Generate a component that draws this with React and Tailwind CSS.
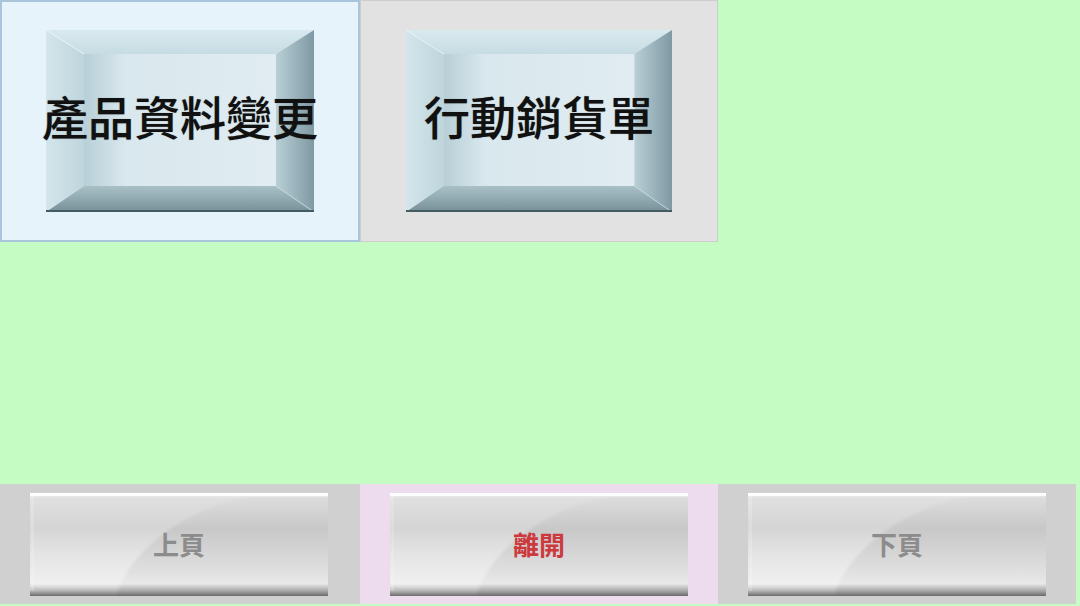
import React from "react";

const cjk = { fontFamily: '"Noto Sans CJK TC", "Noto Sans CJK SC", sans-serif' };

function BevelButton({ label, width, id }) {
  return (
    <div className="relative h-[182px] flex items-center justify-center" style={{ width }}>
      <svg className="absolute inset-0 h-full w-full" viewBox="0 0 268 182" preserveAspectRatio="none">
        <defs>
          <linearGradient id={`top-${id}`} x1="0" y1="0" x2="0" y2="1">
            <stop offset="0" stopColor="#d9eaef" />
            <stop offset="1" stopColor="#c6dce3" />
          </linearGradient>
          <linearGradient id={`left-${id}`} x1="0" y1="0" x2="1" y2="0">
            <stop offset="0" stopColor="#d3e6ec" />
            <stop offset="1" stopColor="#bfd5dc" />
          </linearGradient>
          <linearGradient id={`right-${id}`} x1="0" y1="0" x2="1" y2="0">
            <stop offset="0" stopColor="#b9cfd6" />
            <stop offset="1" stopColor="#7f99a3" />
          </linearGradient>
          <linearGradient id={`bottom-${id}`} x1="0" y1="0" x2="0" y2="1">
            <stop offset="0" stopColor="#a9c0c7" />
            <stop offset="0.9" stopColor="#7c959d" />
            <stop offset="1" stopColor="#4e666e" />
          </linearGradient>
          <linearGradient id={`face-${id}`} x1="0" y1="0" x2="1" y2="0">
            <stop offset="0" stopColor="#b8cfd7" />
            <stop offset="0.22" stopColor="#d9e8ee" />
            <stop offset="1" stopColor="#e0ecf1" />
          </linearGradient>
        </defs>
        <polygon points="0,0 268,0 230,24 38,24" fill={`url(#top-${id})`} />
        <polygon points="0,0 38,24 38,156 0,182" fill={`url(#left-${id})`} />
        <polygon points="268,0 268,182 230,156 230,24" fill={`url(#right-${id})`} />
        <polygon points="0,182 38,156 230,156 268,182" fill={`url(#bottom-${id})`} />
        <rect x="38" y="24" width="192" height="132" fill={`url(#face-${id})`} />
        <line x1="0" y1="0" x2="38" y2="24" stroke="#eef7fa" strokeWidth="1" opacity="0.8" />
        <line x1="268" y1="182" x2="230" y2="156" stroke="#c9dce2" strokeWidth="1" opacity="0.8" />
        <line x1="0" y1="181" x2="268" y2="181" stroke="#435b63" strokeWidth="2" />
      </svg>
      <span
        className="relative -translate-y-[6px] whitespace-nowrap text-[46px] leading-none font-medium text-[#111]"
        style={{ ...cjk, textShadow: "0 0 1px rgba(0,0,0,0.4)" }}
      >
        {label}
      </span>
    </div>
  );
}

function GlossButton({ label, color, id }) {
  return (
    <div className="relative w-[298px] h-[103px] flex items-center justify-center">
      <svg className="absolute inset-0 h-full w-full" viewBox="0 0 298 103" preserveAspectRatio="none">
        <defs>
          <linearGradient id={`base-${id}`} x1="0" y1="0" x2="0" y2="1">
            <stop offset="0" stopColor="#fafafa" />
            <stop offset="0.05" stopColor="#dcdcdc" />
            <stop offset="0.35" stopColor="#c8c8c8" />
            <stop offset="0.7" stopColor="#dcdcdc" />
            <stop offset="0.88" stopColor="#e8e8e8" />
            <stop offset="0.95" stopColor="#a8a8a8" />
            <stop offset="1" stopColor="#6a6a6a" />
          </linearGradient>
          <linearGradient id={`gloss-${id}`} x1="0" y1="0" x2="0" y2="1">
            <stop offset="0" stopColor="#ffffff" stopOpacity="0.1" />
            <stop offset="0.6" stopColor="#ffffff" stopOpacity="0.35" />
            <stop offset="0.88" stopColor="#ffffff" stopOpacity="0.35" />
            <stop offset="1" stopColor="#ffffff" stopOpacity="0" />
          </linearGradient>
          <filter id={`blur-${id}`}>
            <feGaussianBlur stdDeviation="1.5" />
          </filter>
        </defs>
        <rect x="0" y="0" width="298" height="103" fill={`url(#base-${id})`} />
        <path d="M0,2 L232,2 C175,8 105,45 86,103 L0,103 Z" fill={`url(#gloss-${id})`} filter={`url(#blur-${id})`} />
        <rect x="0" y="0" width="298" height="3" fill="#ffffff" opacity="0.9" />
        <rect x="0" y="0" width="4" height="98" fill="#ffffff" opacity="0.2" />
      </svg>
      <span className="relative text-[26px] leading-none font-bold" style={{ ...cjk, color }}>
        {label}
      </span>
    </div>
  );
}

export default function App() {
  return (
    <div className="w-[1080px] h-[606px] bg-[#c4fcc4] flex flex-col overflow-hidden">
      <div className="flex h-[242px]">
        <div className="w-[360px] h-full border-2 border-[#a9c5db] bg-[#e6f3fb] flex items-center justify-center">
          <BevelButton label="產品資料變更" width={268} id="a" />
        </div>
        <div className="w-[358px] h-full border border-[#cdcdcd] bg-[#e2e2e2] flex items-center justify-center">
          <BevelButton label="行動銷貨單" width={266} id="b" />
        </div>
      </div>
      <div className="flex-1" />
      <div className="flex h-[120px] mb-[2px]">
        <div className="w-[360px] h-full bg-[#d0d0d0] flex items-center justify-center pr-[2px]">
          <GlossButton label="上頁" color="#8c8c8c" id="p" />
        </div>
        <div className="w-[358px] h-full bg-[#eddcee] flex items-center justify-center">
          <GlossButton label="離開" color="#cc3a3e" id="x" />
        </div>
        <div className="w-[358px] h-full bg-[#d0d0d0] flex items-center justify-center">
          <GlossButton label="下頁" color="#8c8c8c" id="n" />
        </div>
      </div>
    </div>
  );
}
